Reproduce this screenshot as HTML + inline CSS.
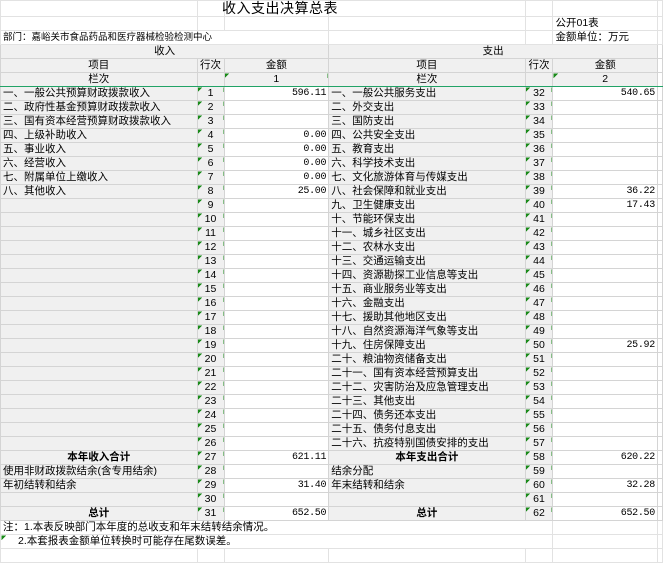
<!DOCTYPE html>
<html><head><meta charset="utf-8"><style>
body{margin:0;background:#fff;width:663px;height:557px;overflow:hidden;font-family:"Liberation Sans","Noto Sans CJK SC",sans-serif;font-size:11px;color:#000}
table{border-collapse:collapse;table-layout:fixed;position:absolute;left:0;top:0}
td{border:1px solid #d4d4d4;padding:0 2px;height:13px;line-height:13px;white-space:nowrap;overflow:hidden;font-size:10.5px}
.g{background:#f0f0f0}
.c{text-align:center}
.r{text-align:right;font-family:"Liberation Mono",monospace;font-size:10px;letter-spacing:-0.3px}
.b{font-weight:bold;text-align:center}
.t{background:linear-gradient(135deg,#1a8a1a 3.5px,transparent 3.5px),#f0f0f0}
.tw{background:linear-gradient(135deg,#1a8a1a 3.5px,transparent 3.5px),#fff}
.top td{border-color:#e2e2e2}
.gl td{border-bottom:1px solid #21a366}
.title{position:absolute;left:222px;top:0;font-size:14px;line-height:17px;letter-spacing:0.5px;font-family:"Liberation Sans","Noto Sans CJK SC",sans-serif}
</style></head><body>
<table>
<colgroup><col style="width:197px"><col style="width:27px"><col style="width:106px"><col style="width:197px"><col style="width:28px"><col style="width:105px"><col style="width:3px"></colgroup>
<tr class="top"><td style="height:15px"></td><td></td><td></td><td></td><td></td><td></td><td></td></tr>
<tr class="top"><td></td><td></td><td></td><td></td><td></td><td>公开01表</td><td></td></tr>
<tr class="top"><td colspan="3" style="font-size:9.5px">部门：嘉峪关市食品药品和医疗器械检验检测中心</td><td></td><td></td><td>金额单位：万元</td><td></td></tr>
<tr><td colspan="3" class="g c">收入</td><td colspan="3" class="g c">支出</td><td></td></tr>
<tr><td class="g c">项目</td><td class="g c">行次</td><td class="g c">金额</td><td class="g c">项目</td><td class="g c">行次</td><td class="g c">金额</td><td></td></tr>
<tr class="gl"><td class="g c" style="height:12px">栏次</td><td class="g"></td><td class="t c">1</td><td class="g c">栏次</td><td class="g"></td><td class="t c">2</td><td></td></tr>
<tr><td class="g">一、一般公共预算财政拨款收入</td><td class="t c">1</td><td class="r">596.11</td><td class="g">一、一般公共服务支出</td><td class="t c">32</td><td class="r">540.65</td><td></td></tr>
<tr><td class="g">二、政府性基金预算财政拨款收入</td><td class="t c">2</td><td class="r"></td><td class="g">二、外交支出</td><td class="t c">33</td><td class="r"></td><td></td></tr>
<tr><td class="g">三、国有资本经营预算财政拨款收入</td><td class="t c">3</td><td class="r"></td><td class="g">三、国防支出</td><td class="t c">34</td><td class="r"></td><td></td></tr>
<tr><td class="g">四、上级补助收入</td><td class="t c">4</td><td class="r">0.00</td><td class="g">四、公共安全支出</td><td class="t c">35</td><td class="r"></td><td></td></tr>
<tr><td class="g">五、事业收入</td><td class="t c">5</td><td class="r">0.00</td><td class="g">五、教育支出</td><td class="t c">36</td><td class="r"></td><td></td></tr>
<tr><td class="g">六、经营收入</td><td class="t c">6</td><td class="r">0.00</td><td class="g">六、科学技术支出</td><td class="t c">37</td><td class="r"></td><td></td></tr>
<tr><td class="g">七、附属单位上缴收入</td><td class="t c">7</td><td class="r">0.00</td><td class="g">七、文化旅游体育与传媒支出</td><td class="t c">38</td><td class="r"></td><td></td></tr>
<tr><td class="g">八、其他收入</td><td class="t c">8</td><td class="r">25.00</td><td class="g">八、社会保障和就业支出</td><td class="t c">39</td><td class="r">36.22</td><td></td></tr>
<tr><td class="g"></td><td class="t c">9</td><td></td><td class="g">九、卫生健康支出</td><td class="t c">40</td><td class="r">17.43</td><td></td></tr>
<tr><td class="g"></td><td class="t c">10</td><td></td><td class="g">十、节能环保支出</td><td class="t c">41</td><td></td><td></td></tr>
<tr><td class="g"></td><td class="t c">11</td><td></td><td class="g">十一、城乡社区支出</td><td class="t c">42</td><td></td><td></td></tr>
<tr><td class="g"></td><td class="t c">12</td><td></td><td class="g">十二、农林水支出</td><td class="t c">43</td><td></td><td></td></tr>
<tr><td class="g"></td><td class="t c">13</td><td></td><td class="g">十三、交通运输支出</td><td class="t c">44</td><td></td><td></td></tr>
<tr><td class="g"></td><td class="t c">14</td><td></td><td class="g">十四、资源勘探工业信息等支出</td><td class="t c">45</td><td></td><td></td></tr>
<tr><td class="g"></td><td class="t c">15</td><td></td><td class="g">十五、商业服务业等支出</td><td class="t c">46</td><td></td><td></td></tr>
<tr><td class="g"></td><td class="t c">16</td><td></td><td class="g">十六、金融支出</td><td class="t c">47</td><td></td><td></td></tr>
<tr><td class="g"></td><td class="t c">17</td><td></td><td class="g">十七、援助其他地区支出</td><td class="t c">48</td><td></td><td></td></tr>
<tr><td class="g"></td><td class="t c">18</td><td></td><td class="g">十八、自然资源海洋气象等支出</td><td class="t c">49</td><td></td><td></td></tr>
<tr><td class="g"></td><td class="t c">19</td><td></td><td class="g">十九、住房保障支出</td><td class="t c">50</td><td class="r">25.92</td><td></td></tr>
<tr><td class="g"></td><td class="t c">20</td><td></td><td class="g">二十、粮油物资储备支出</td><td class="t c">51</td><td></td><td></td></tr>
<tr><td class="g"></td><td class="t c">21</td><td></td><td class="g">二十一、国有资本经营预算支出</td><td class="t c">52</td><td></td><td></td></tr>
<tr><td class="g"></td><td class="t c">22</td><td></td><td class="g">二十二、灾害防治及应急管理支出</td><td class="t c">53</td><td></td><td></td></tr>
<tr><td class="g"></td><td class="t c">23</td><td></td><td class="g">二十三、其他支出</td><td class="t c">54</td><td></td><td></td></tr>
<tr><td class="g"></td><td class="t c">24</td><td></td><td class="g">二十四、债务还本支出</td><td class="t c">55</td><td></td><td></td></tr>
<tr><td class="g"></td><td class="t c">25</td><td></td><td class="g">二十五、债务付息支出</td><td class="t c">56</td><td></td><td></td></tr>
<tr><td class="g"></td><td class="t c">26</td><td></td><td class="g">二十六、抗疫特别国债安排的支出</td><td class="t c">57</td><td></td><td></td></tr>
<tr><td class="g b">本年收入合计</td><td class="t c">27</td><td class="r">621.11</td><td class="g b">本年支出合计</td><td class="t c">58</td><td class="r">620.22</td><td></td></tr>
<tr><td class="g">使用非财政拨款结余(含专用结余)</td><td class="t c">28</td><td></td><td class="g">结余分配</td><td class="t c">59</td><td></td><td></td></tr>
<tr><td class="g">年初结转和结余</td><td class="t c">29</td><td class="r">31.40</td><td class="g">年末结转和结余</td><td class="t c">60</td><td class="r">32.28</td><td></td></tr>
<tr><td class="g"></td><td class="t c">30</td><td></td><td class="g"></td><td class="t c">61</td><td></td><td></td></tr>
<tr><td class="g b">总计</td><td class="t c">31</td><td class="r">652.50</td><td class="g b">总计</td><td class="t c">62</td><td class="r">652.50</td><td></td></tr>
<tr class="top"><td colspan="4" style="border-right-color:#fff">注：1.本表反映部门本年度的总收支和年末结转结余情况。</td><td></td><td></td><td></td></tr>
<tr class="top"><td colspan="4" class="tw" style="padding-left:17px;border-right-color:#fff">2.本套报表金额单位转换时可能存在尾数误差。</td><td></td><td></td><td></td></tr>
<tr class="top"><td></td><td></td><td></td><td></td><td></td><td></td><td></td></tr>
</table>
<div class="title">收入支出决算总表</div>
</body></html>
